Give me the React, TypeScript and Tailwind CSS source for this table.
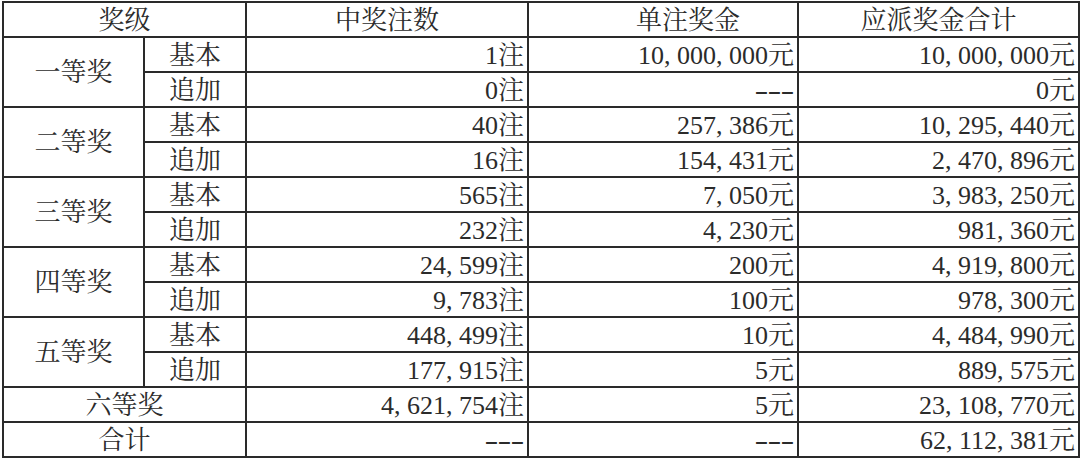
import React from 'react';

const tiers: { name: string; rows: [string, string, string, string][] }[] = [
  { name: '一等奖', rows: [['基本', '1注', '10,000,000元', '10,000,000元'], ['追加', '0注', '---', '0元']] },
  { name: '二等奖', rows: [['基本', '40注', '257,386元', '10,295,440元'], ['追加', '16注', '154,431元', '2,470,896元']] },
  { name: '三等奖', rows: [['基本', '565注', '7,050元', '3,983,250元'], ['追加', '232注', '4,230元', '981,360元']] },
  { name: '四等奖', rows: [['基本', '24,599注', '200元', '4,919,800元'], ['追加', '9,783注', '100元', '978,300元']] },
  { name: '五等奖', rows: [['基本', '448,499注', '10元', '4,484,990元'], ['追加', '177,915注', '5元', '889,575元']] },
];

// SimSun-like spacing: commas and hyphens take a full half-width cell
function Num({ text }: { text: string }) {
  return (
    <>
      {text.split('').map((c, i) =>
        c === ',' ? (
          <span key={i} className="inline-block w-[0.5em] text-left">,</span>
        ) : c === '-' ? (
          <span key={i} className="inline-block w-[0.5em] text-center scale-x-[1.6]">-</span>
        ) : (
          <React.Fragment key={i}>{c}</React.Fragment>
        )
      )}
    </>
  );
}

const cell = 'border-2 border-[#2a2a2a] h-[35px] p-0 pt-[2px] leading-none';
const right = `${cell} text-right pr-[3px]`;
const center = `${cell} text-center`;

export default function App() {
  return (
    <div className="w-[1080px] h-[464px] bg-white overflow-hidden pt-[1px] pl-[2px]">
      <table
        className="w-[1076px] table-fixed border-collapse text-[26px] text-[#2b2b2b]"
        style={{ fontFamily: '"Liberation Serif", "Noto Serif CJK SC", "Noto Sans CJK SC", serif' }}
      >
        <colgroup>
          <col className="w-[141px]" />
          <col className="w-[102px]" />
          <col className="w-[282px]" />
          <col className="w-[270px]" />
          <col className="w-[281px]" />
        </colgroup>
        <tbody>
          <tr>
            <td colSpan={2} className={center}>奖级</td>
            <td className={center}>中奖注数</td>
            <td className={`${center} pl-[50px]`}>单注奖金</td>
            <td className={center}>应派奖金合计</td>
          </tr>
          {tiers.map((t) =>
            t.rows.map((r, i) => (
              <tr key={t.name + i}>
                {i === 0 && (
                  <td rowSpan={2} className={center}>{t.name}</td>
                )}
                <td className={center}>{r[0]}</td>
                <td className={right}><Num text={r[1]} /></td>
                <td className={right}><Num text={r[2]} /></td>
                <td className={right}><Num text={r[3]} /></td>
              </tr>
            ))
          )}
          <tr>
            <td colSpan={2} className={center}>六等奖</td>
            <td className={right}><Num text="4,621,754注" /></td>
            <td className={right}><Num text="5元" /></td>
            <td className={right}><Num text="23,108,770元" /></td>
          </tr>
          <tr>
            <td colSpan={2} className={center}>合计</td>
            <td className={right}><Num text="---" /></td>
            <td className={right}><Num text="---" /></td>
            <td className={right}><Num text="62,112,381元" /></td>
          </tr>
        </tbody>
      </table>
    </div>
  );
}
